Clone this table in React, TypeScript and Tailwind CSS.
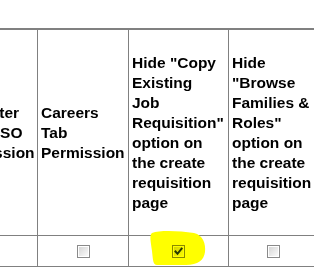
import React from "react";

const font = { fontFamily: '"Liberation Sans", Arial, sans-serif' };

function Box({ checked = false }: { checked?: boolean }) {
  return (
    <div
      className={
        "relative w-[13px] h-[13px] border border-[#8a8a8a] p-px bg-white" +
        (checked ? " z-10 mix-blend-multiply" : "")
      }
    >
      <div className="w-full h-full bg-gradient-to-br from-[#d6d6d6] to-[#fafafa]" />
      {checked && (
        <svg className="absolute left-0 top-0" width="11" height="11" viewBox="0 0 11 11">
          <path d="M2.5 5.5 L4.5 7.8 L8.6 2.6" fill="none" stroke="#263a12" strokeWidth="2" strokeLinecap="square" />
        </svg>
      )}
    </div>
  );
}

const cols = [
  { w: "w-[90px]", lines: ["Recruiter", "User SSO", "Permission"], box: null as null | boolean },
  { w: "w-[91px]", lines: ["Careers", "Tab", "Permission"], box: false },
  {
    w: "w-[100px]",
    lines: ['Hide "Copy', "Existing", "Job", 'Requisition"', "option on", "the create", "requisition", "page"],
    box: true,
  },
  {
    w: "w-[89px]",
    lines: ["Hide", '"Browse', "Families &", 'Roles"', "option on", "the create", "requisition", "page"],
    box: false,
  },
];

export default function App() {
  return (
    <div className="relative w-[314px] h-[267px] overflow-hidden bg-white" style={font}>
      <div className="pt-[28px]">
        {/* table scrolled horizontally so its first column is partly hidden */}
        <div className="ml-[-52px] w-[370px]">
          <div className="flex h-[208px] border-t-2 border-b border-[#808080]">
            {cols.map((c, i) => (
              <div
                key={i}
                className={`${c.w} shrink-0 border-r border-[#808080] flex items-center pl-[3px] text-[15.5px] leading-[20px] font-bold text-black`}
              >
                <div className="whitespace-nowrap">
                  {c.lines.map((l, j) => (
                    <div key={j}>{l}</div>
                  ))}
                </div>
              </div>
            ))}
          </div>
          <div className="flex h-[31px] border-b border-[#808080]">
            {cols.map((c, i) => (
              <div
                key={i}
                className={`${c.w} shrink-0 border-r border-[#808080] flex items-center justify-center pt-px`}
              >
                {c.box !== null && <Box checked={c.box} />}
              </div>
            ))}
          </div>
        </div>
      </div>
      {/* highlighter stroke around the ticked box */}
      <svg className="absolute left-[148px] top-[229px]" width="62" height="38" viewBox="0 0 62 38">
        <path
          d="M4 4 C12 1, 32 2, 46 4 C55 6, 58 15, 57 23 C56 31, 50 36, 38 36 L9 36 C5 36, 5 31, 4 22 C3 14, 1 6, 4 4 Z"
          fill="#ffff00"
        />
      </svg>
    </div>
  );
}
